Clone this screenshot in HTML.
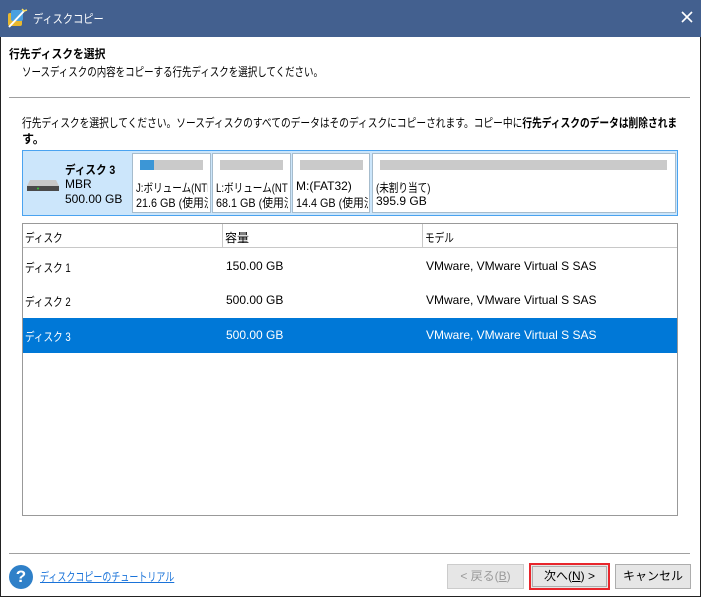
<!DOCTYPE html>
<html><head><meta charset="utf-8"><style>
*{box-sizing:border-box;margin:0;padding:0}
body{width:701px;height:597px;overflow:hidden;background:#fff;font-family:"Liberation Sans","Noto Sans CJK JP",sans-serif;font-size:12px;color:#000;position:relative}
.a{position:absolute;white-space:nowrap}
.c{transform:scaleX(.8);transform-origin:0 0}
.win{position:absolute;left:0;top:0;width:701px;height:597px;border:1px solid #222;}
</style></head><body>
<div class="win"></div>
<div class="a" style="left:0;top:0;width:701px;height:37px;background:#43608f"></div>
<svg class="a" style="left:6px;top:7px" width="22" height="22" viewBox="0 0 22 22"><rect x="2" y="6" width="14" height="13" rx="2" fill="#e8b830"/><rect x="5" y="3" width="12" height="11" rx="2" fill="#4aa0e0"/><path d="M3 20 L18 4" stroke="#fff" stroke-width="2"/><path d="M16 2 l2 2 l3 -1" stroke="#ffe060" stroke-width="1.5" fill="none"/></svg>
<div class="a" style="left:33px;top:10px;color:#fff;transform:scaleX(.85);transform-origin:0 0">ディスクコピー</div>
<svg class="a" style="left:681px;top:11px" width="12" height="12" viewBox="0 0 12 12"><path d="M1 1L11 11M11 1L1 11" stroke="#fff" stroke-width="1.6"/></svg>
<div class="a" style="left:9px;top:45px;font-weight:bold;transform:scaleX(.9);transform-origin:0 0">行先ディスクを選択</div>
<div class="a" style="left:22px;top:63px;transform:scaleX(.79);transform-origin:0 0">ソースディスクの内容をコピーする行先ディスクを選択してください。</div>
<div class="a" style="left:9px;top:97px;width:681px;height:1px;background:#a0a0a0"></div>
<div class="a" style="left:22px;top:114px;transform:scaleX(.81);transform-origin:0 0">行先ディスクを選択してください。ソースディスクのすべてのデータはそのディスクにコピーされます。コピー中に<b>行先ディスクのデータは削除されま</b></div>
<div class="a" style="left:22px;top:130px;font-weight:bold">す。</div>
<div class="a" style="left:22px;top:150px;width:656px;height:66px;border:1px solid #4aa3f0;background:#cce6fb"></div>
<svg class="a" style="left:26px;top:178px" width="34" height="14" viewBox="0 0 34 14"><path d="M4 2 H30 L33 8 H1 Z" fill="#c8c8c8"/><rect x="1" y="8" width="32" height="5" fill="#4a4a4a"/><circle cx="12" cy="10.5" r="1" fill="#3c3"/></svg>
<div class="a" style="left:65px;top:161px;font-weight:bold;transform:scaleX(.88);transform-origin:0 0">ディスク 3</div>
<div class="a" style="left:65px;top:177px">MBR</div>
<div class="a" style="left:65px;top:192px">500.00 GB</div>
<div class="a" style="left:132px;top:153px;width:79px;height:60px;border:1px solid #a6bccd;background:#fff"></div>
<div class="a" style="left:140px;top:160px;width:63px;height:10px;background:#cacaca"></div>
<div class="a" style="left:140px;top:160px;width:14px;height:10px;background:#3c96d6"></div>
<div class="a" style="left:136px;top:179px;width:72px;overflow:hidden"><div class="c">J:ボリューム(NTFS)</div></div>
<div class="a" style="left:136px;top:194px;width:72px;overflow:hidden"><div style="transform:scaleX(.9);transform-origin:0 0">21.6 GB (使用済み)</div></div>
<div class="a" style="left:212px;top:153px;width:79px;height:60px;border:1px solid #a6bccd;background:#fff"></div>
<div class="a" style="left:220px;top:160px;width:63px;height:10px;background:#cacaca"></div>
<div class="a" style="left:216px;top:179px;width:72px;overflow:hidden"><div class="c">L:ボリューム(NTFS)</div></div>
<div class="a" style="left:216px;top:194px;width:72px;overflow:hidden"><div style="transform:scaleX(.9);transform-origin:0 0">68.1 GB (使用済み)</div></div>
<div class="a" style="left:292px;top:153px;width:78px;height:60px;border:1px solid #a6bccd;background:#fff"></div>
<div class="a" style="left:300px;top:160px;width:63px;height:10px;background:#cacaca"></div>
<div class="a" style="left:296px;top:179px;width:72px;overflow:hidden"><div>M:(FAT32)</div></div>
<div class="a" style="left:296px;top:194px;width:72px;overflow:hidden"><div style="transform:scaleX(.9);transform-origin:0 0">14.4 GB (使用済み)</div></div>
<div class="a" style="left:372px;top:153px;width:304px;height:60px;border:1px solid #a6bccd;background:#fff"></div>
<div class="a" style="left:380px;top:160px;width:287px;height:10px;background:#cacaca"></div>
<div class="a c" style="left:376px;top:179px">(未割り当て)</div>
<div class="a" style="left:376px;top:194px">395.9 GB</div>
<div class="a" style="left:22px;top:223px;width:656px;height:293px;border:1px solid #999"></div>
<div class="a" style="left:23px;top:247px;width:654px;height:1px;background:#c8c8c8"></div>
<div class="a" style="left:222px;top:224px;width:1px;height:23px;background:#c8c8c8"></div>
<div class="a" style="left:422px;top:224px;width:1px;height:23px;background:#c8c8c8"></div>
<div class="a c" style="left:25px;top:229px">ディスク</div>
<div class="a" style="left:225px;top:229px">容量</div>
<div class="a c" style="left:425px;top:229px">モデル</div>
<div class="a c" style="left:25px;top:259px">ディスク 1</div>
<div class="a" style="left:226px;top:259px">150.00 GB</div>
<div class="a" style="left:426px;top:259px">VMware, VMware Virtual S SAS</div>
<div class="a c" style="left:25px;top:293px">ディスク 2</div>
<div class="a" style="left:226px;top:293px">500.00 GB</div>
<div class="a" style="left:426px;top:293px">VMware, VMware Virtual S SAS</div>
<div class="a" style="left:23px;top:318px;width:654px;height:35px;background:#0078d7"></div>
<div class="a c" style="left:25px;top:328px;color:#fff">ディスク 3</div>
<div class="a" style="left:226px;top:328px;color:#fff">500.00 GB</div>
<div class="a" style="left:426px;top:328px;color:#fff">VMware, VMware Virtual S SAS</div>
<div class="a" style="left:9px;top:553px;width:681px;height:1px;background:#a0a0a0"></div>
<div class="a" style="left:9px;top:565px;width:24px;height:24px;border-radius:50%;background:#2f80c8;color:#fff;font-weight:bold;font-size:17px;text-align:center;line-height:24px">?</div>
<div class="a" style="left:40px;top:568px;color:#1a73d9;text-decoration:underline;transform:scaleX(.75);transform-origin:0 0">ディスクコピーのチュートリアル</div>
<div class="a" style="left:447px;top:564px;width:77px;height:25px;border:1px solid #ccc;background:#e6e6e6;color:#9a9a9a;text-align:center;line-height:23px">&lt; 戻る(<u>B</u>)</div>
<div class="a" style="left:529px;top:563px;width:81px;height:27px;border:2px solid #e8262c;background:#e6e6e6"></div>
<div class="a" style="left:532px;top:566px;width:75px;height:21px;border:1px solid #adadad;text-align:center;line-height:19px">次へ(<u>N</u>) &gt;</div>
<div class="a" style="left:615px;top:564px;width:76px;height:25px;border:1px solid #adadad;background:#e6e6e6;text-align:center;line-height:23px">キャンセル</div>
</body></html>
